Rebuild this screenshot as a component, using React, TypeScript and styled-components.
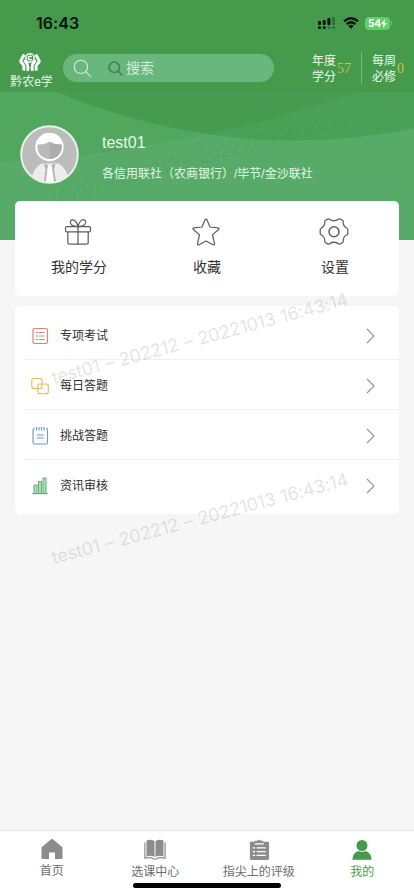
import React from "react";
import styled, { createGlobalStyle } from "styled-components";

const Global = createGlobalStyle`
  * { box-sizing: border-box; }
  html, body { margin: 0; padding: 0; background: #f6f6f6; }
  body { font-family: "Liberation Sans", "Noto Sans CJK SC", sans-serif; color: #333; }
  svg { display: block; flex: none; }
`;

const Screen = styled.div`
  position: relative;
  width: 414px;
  height: 896px;
  overflow: hidden;
  display: flex;
  flex-direction: column;
  background: #f6f6f6;
`;

const TopArea = styled.header`
  height: 91px;
  flex: none;
  background: #459a4c;
`;

const StatusBar = styled.div`
  height: 46px;
  padding: 0 22px 0 36px;
  display: flex;
  align-items: center;
  justify-content: space-between;
`;

const Clock = styled.span`
  font: 600 16px/20px Inter, sans-serif;
  letter-spacing: 0.05px;
  color: #071208;
`;

const StatusIcons = styled.div`
  display: flex;
  align-items: center;
  gap: 8px;
`;

const Battery = styled.div`
  width: 25px;
  height: 13px;
  border-radius: 4px;
  background: #62cf6b;
  color: #fff;
  font: 700 10px/13px Inter, sans-serif;
  display: flex;
  align-items: center;
  justify-content: center;
`;

const BatteryGroup = styled.div`
  display: flex;
  align-items: center;
  gap: 1px;
  margin-left: -2px;
`;

const BatteryTip = styled.i`
  width: 1px;
  height: 4px;
  background: #62cf6b;
`;

const NavRow = styled.div`
  height: 45px;
  display: flex;
  align-items: flex-start;
  padding-left: 10px;
`;

const Brand = styled.div`
  width: 43px;
  margin-right: 10px;
  padding-top: 6px;
  display: flex;
  flex-direction: column;
  align-items: center;
`;

const BrandMark = styled.span`
  margin-right: 4px;
`;

const BrandName = styled.span`
  margin-top: 2px;
  font-size: 12px;
  line-height: 16px;
  color: #eaf7eb;
  white-space: nowrap;
`;

const Search = styled.div`
  width: 211px;
  height: 28px;
  margin-top: 8px;
  border-radius: 14px;
  background: #6ab77e;
  display: flex;
  align-items: center;
`;

const SearchLead = styled.div`
  width: 37px;
  height: 28px;
  padding-left: 10px;
  border-right: 1px solid #67b47b;
  display: flex;
  align-items: center;
`;

const SearchGlyph = styled.span`
  margin-left: 8px;
`;

const SearchText = styled.span`
  margin-left: 3px;
  font-size: 14px;
  line-height: 20px;
  color: #d4edda;
`;

const Stat = styled.div<{ $left: number }>`
  margin-left: ${(p) => p.$left}px;
  padding-top: 6px;
  display: flex;
  align-items: center;
  height: 39px;
`;

const StatLabel = styled.span`
  width: 24px;
  font-size: 12px;
  line-height: 16px;
  color: #eff9ef;
`;

const StatValue = styled.span`
  margin-left: 1px;
  font: 14px/16px "Liberation Serif", serif;
  color: #cfc046;
`;

const StatRule = styled.i`
  width: 1px;
  height: 32px;
  margin: 6px 0 0 10px;
  background: #78b77d;
`;

const Hero = styled.section`
  display: grid;
  height: 149px;
  flex: none;
  margin-bottom: -39.5px;
  > * { grid-area: 1 / 1; }
`;

const Profile = styled.div`
  display: flex;
  align-items: flex-start;
  padding: 33px 0 0 20px;
`;

const ProfileText = styled.div`
  margin-left: 23px;
  padding-top: 8px;
  display: flex;
  flex-direction: column;
`;

const UserName = styled.strong`
  font-weight: 400;
  font-size: 16px;
  line-height: 22px;
  color: #e4fae7;
`;

const UserOrg = styled.span`
  margin-top: 11px;
  font-size: 12px;
  line-height: 18px;
  color: #e4fae7;
  white-space: nowrap;
`;

const Card = styled.section`
  width: 384px;
  flex: none;
  margin-left: 15px;
  border-radius: 5px;
  background: #fff;
  position: relative;
`;

const Shortcuts = styled(Card)`
  height: 95px;
  display: grid;
  grid-template-columns: repeat(3, 1fr);
`;

const Shortcut = styled.div`
  padding-top: 16px;
  display: flex;
  flex-direction: column;
  align-items: center;
  gap: 10.4px;
  font-size: 14px;
  line-height: 20px;
  color: #333;
  > svg { margin-right: 2px; }
`;

const Menu = styled(Card)`
  height: 208.5px;
  margin-top: 10px;
  padding: 4px 0 0 10px;
`;

const MenuRow = styled.div<{ $last?: boolean }>`
  height: ${(p) => (p.$last ? 48.5 : 50.2)}px;
  display: flex;
  align-items: center;
  padding: 3px 24px 0 6px;
  border-bottom: ${(p) => (p.$last ? "0" : "1.5px solid #f0f0f0")};
`;

const MenuLabel = styled.span`
  margin-left: 11px;
  flex: 1;
  font-size: 12px;
  line-height: 18px;
  color: #2e2e2e;
`;

const Chevron = styled.svg`
  margin-top: 1px;
`;

const Spacer = styled.div`
  flex: 1;
`;

const TabBar = styled.nav`
  height: 66px;
  flex: none;
  border-top: 1px solid #e6e6e6;
  background: #fff;
  display: grid;
  grid-template-columns: repeat(4, 1fr);
`;

const Tab = styled.div<{ $active?: boolean; $drop?: number }>`
  padding-top: ${(p) => 6.5 + (p.$drop ?? 0)}px;
  display: flex;
  flex-direction: column;
  align-items: center;
  gap: 2px;
  font-size: 12px;
  line-height: 18px;
  color: ${(p) => (p.$active ? "#459a4c" : "#6d6d6d")};
`;

const HomeIndicator = styled.i`
  position: absolute;
  left: 133px;
  bottom: 8px;
  width: 148px;
  height: 5px;
  border-radius: 3px;
  background: #000;
`;

const Watermark = styled.span<{ $top: number; $faint?: boolean }>`
  position: absolute;
  left: 55px;
  top: ${(p) => p.$top}px;
  transform: rotate(-15deg);
  transform-origin: 0 100%;
  font: 400 18px/22px Inter, sans-serif;
  letter-spacing: -0.2px;
  word-spacing: 0.9px;
  white-space: nowrap;
  color: ${(p) => (p.$faint ? "rgba(60, 100, 60, 0.09)" : "rgba(130, 130, 130, 0.22)")};
  pointer-events: none;
`;

const Waves = () => (
  <svg width="414" height="149" viewBox="0 0 414 149">
    <path fill="#58aa69" d="M0 0h414v149H0z" />
    <path fill="#52a75f" d="M0 0H358C310 18 260 32 207 43Q110 65 0 71z" />
    <path fill="#4ba057" d="M55 0C100 19 150 34 207 43S340 53 414 37V0z" />
    <path fill="#479b50" d="M55 0C100 19 150 34 207 43C260 32 310 18 358 0z" />
    <path fill="#439548" opacity=".6" d="M0 0h414v1H0z" />
  </svg>
);

const Avatar = () => (
  <svg width="59" height="60" viewBox="0 0 59 60">
    <defs>
      <clipPath id="avatar-disc"><circle cx="29.5" cy="30.5" r="28" /></clipPath>
    </defs>
    <circle cx="29.5" cy="30.5" r="28.5" fill="#bcbcbc" />
    <g clipPath="url(#avatar-disc)">
      <path fill="#ededed" d="M10 60c2-11 6-18 12-20.500h16c6 2.500 10 9.500 12 20.500z" />
      <path fill="#b5b5b5" d="M24 39.500 28 41 25.500 60H23.500L25.500 46zM35.500 39.500 31.500 41 34.500 60H36.500L34 46z" />
      <path fill="#fff" d="M28 42h3.500l2.500 18h-8z" />
      <circle cx="29.5" cy="23" r="14.200" fill="#fff" />
      <path fill="#bababa" d="M17.500 20.500c5 .4 9-.8 12-3 3 2.200 7 3.400 12 3 1.200 8-4 14.500-12 14.500s-13.200-6.500-12-14.500z" />
      <path fill="#adadad" d="M29.500 17.500c3 2.200 7 3.400 12 3 1.200 8-4 14.500-12 14.500z" />
    </g>
    <circle cx="29.5" cy="30.5" r="28.300" fill="none" stroke="#e7f5e9" strokeWidth="1.900" />
  </svg>
);

const Logo = () => (
  <svg width="22" height="20" viewBox="0 0 22 20" fill="none" stroke="#fff">
    <path strokeWidth="3" d="M5.200 2.500 1.900 8.500Q1.500 10 3 11.200 6 13.500 4.500 18.500M16.800 2.500 20.100 8.500Q20.500 10 19 11.200 16 13.500 17.500 18.500" />
    <path strokeWidth="2.800" d="M5.200 8.300Q10.300 12 8.500 18.800M16.800 8.300Q11.700 12 13.500 18.800" />
    <circle cx="11" cy="6" r="4.200" strokeWidth="1.500" />
    <path strokeWidth="1.500" d="M12.600 5a1.800 1.800 0 1 0 0 2" />
  </svg>
);

const Magnifier = ({ size, color, width }: { size: number; color: string; width: number }) => (
  <svg width={size} height={size} viewBox="0 0 18 18" fill="none" stroke={color} strokeWidth={width} strokeLinecap="round">
    <circle cx="7.500" cy="7.500" r="6.300" />
    <path d="m12.300 12.300 4.400 4.400" />
  </svg>
);

const Signal = () => (
  <svg width="17" height="12" viewBox="0 0 17 12" fill="#071208">
    <rect x="0" y="4" width="3" height="4" rx="1" />
    <rect x="4.700" y="3" width="3" height="5" rx="1" />
    <rect x="9.400" y="1" width="3" height="7" rx="1" />
    <rect x="0" y="9.200" width="3" height="2.800" rx="1" />
    <rect x="4.700" y="9.200" width="3" height="2.800" rx="1" />
    <g opacity=".3">
      <rect x="14" y="0" width="3" height="8" rx="1" />
      <rect x="9.400" y="9.200" width="3" height="2.800" rx="1" />
      <rect x="14" y="9.200" width="3" height="2.800" rx="1" />
    </g>
  </svg>
);

const Wifi = () => (
  <svg width="16" height="12" viewBox="0 0 16 12" fill="none" stroke="#071208" strokeWidth="2.200">
    <path d="M1 4.300Q8-1.800 15 4.300M3.600 7.100Q8 3.400 12.400 7.100" />
    <path stroke="none" fill="#071208" d="M5.300 8.800Q8 6.900 10.700 8.800L8 11.700z" />
  </svg>
);

const Gift = () => (
  <svg width="28" height="30" viewBox="0 0 28 30" fill="none" stroke="#5f5f5f" strokeWidth="1.250">
    <rect x="1.500" y="9.500" width="25" height="5.300" rx="1.300" />
    <path d="M3.800 15v10.500c0 1 .7 1.700 1.700 1.700h17c1 0 1.700-.7 1.700-1.700V15M14 9.500v17.700" />
    <path d="M14 9.500C8 9.500 5.500 7 6.500 4.300S12 2 14 9.500c2-7.500 6.500-8 7.500-5.200S20 9.500 14 9.500z" />
  </svg>
);

const Star = () => (
  <svg width="28" height="30" viewBox="0 0 28 30" fill="none" stroke="#5f5f5f" strokeWidth="1.250" strokeLinejoin="round">
    <path d="M13 2.800c.4-1 1.500-1 1.900 0l3.100 7.200 8 .8c1.100.1 1.400 1 .6 1.700l-6.100 5.400 2 8.800c.2 1-.6 1.600-1.500 1.100L14 24l-7 3.800c-.9.500-1.700-.1-1.500-1.100l2-8.800-6.100-5.400c-.8-.7-.5-1.600.6-1.700l8-.8z" />
  </svg>
);

const Gear = () => (
  <svg width="30" height="30" viewBox="0 0 30 30" fill="none" stroke="#5f5f5f" strokeWidth="1.250" strokeLinejoin="round">
    <path d="M9.200 1.900q.9-.3 1.600.5 4.200 2.700 8.400 0 .7-.8 1.600-.5l2.700 1.400q.8.500.7 1.500-.2 4.700 3.700 6.400.8.400.9 1.400v3.800q-.1 1-.9 1.400-3.900 1.700-3.700 6.400.1 1-.7 1.500l-2.700 1.400q-.9.300-1.600-.5-4.200-2.700-8.400 0-.7.800-1.600.5l-2.700-1.400q-.8-.5-.7-1.500.2-4.700-3.700-6.400-.8-.4-.9-1.400v-3.800q.1-1 .9-1.400 3.900-1.700 3.700-6.400-.1-1 .7-1.500z" />
    <circle cx="15" cy="14.700" r="5" strokeWidth="1.500" />
  </svg>
);

const ExamIcon = () => (
  <svg width="18" height="18" viewBox="0 0 18 18" fill="none" stroke="#da8474">
    <rect x="2" y="1.500" width="14.500" height="15" rx="1.500" strokeWidth="1.200" />
    <path d="M5 5.500h2M8 5.500h5.500M5 9h2M8 9h5.500M5 12.500h2M8 12.500h5.500" />
  </svg>
);

const DailyIcon = () => (
  <svg width="18" height="18" viewBox="0 0 18 18" fill="none" stroke="#e5b85f" strokeWidth="1.100">
    <rect x=".8" y="1.500" width="10.200" height="10" rx="2" />
    <rect x="6.800" y="7" width="10.500" height="9.800" rx="2" />
  </svg>
);

const ChallengeIcon = () => (
  <svg width="18" height="18" viewBox="0 0 18 18" fill="none" stroke="#6699d5" strokeWidth="1.100">
    <path d="M3.500 1.500H3Q2 1.500 2 2.500v13q0 1.500 1.500 1.500H15q1.500 0 1.500-1.500v-13q0-1-1-1H15M5.500 0v3.500M8 0v3.500M10.500 0v3.500M13 0v3.500M5.800 8h7M5.800 11h7" />
  </svg>
);

const ReviewIcon = () => (
  <svg width="18" height="18" viewBox="0 0 18 18" fill="#b7dbc0" stroke="#60ae75" strokeWidth="1">
    <path d="M3 8h3v8.500H3zM7.500 4.500h3v12h-3zM12 1h3v15.500h-3zM1 16.700h16" />
  </svg>
);

const HomeIcon = () => (
  <svg width="22" height="22" viewBox="0 0 22 22" fill="#8c8c8c">
    <path d="M10 1.300q1-.7 2 0l8.500 7.200q1 .8 1 2V20q0 1-1 1H14v-6.500H8V21H1.500q-1 0-1-1v-9.500q0-1.200 1-2z" />
  </svg>
);

const BookIcon = () => (
  <svg width="22" height="22" viewBox="0 0 22 22" fill="#8c8c8c">
    <path d="M2.500 1.500Q7-.2 10.500 2v16Q7 16 2.500 17.500zM11.500 2Q15-.2 19.500 1.500v16Q15 16 11.500 18z" />
    <path fill="none" stroke="#8c8c8c" strokeWidth="1.200" d="M.9 3.500v15.700q5.500-1.500 9 .8h2.200q3.500-2.300 9-.8V3.500" />
  </svg>
);

const ClipboardIcon = () => (
  <svg width="22" height="22" viewBox="0 0 23 22" fill="#8c8c8c">
    <path d="M2 2.500h5V1.300h2.500Q11.500-.8 13.500 1.300H16v1.200h5q1 0 1 1V20q0 1.500-1.500 1.500h-17Q2 21.500 2 20z" />
    <path fill="none" stroke="#fff" strokeWidth="1.300" d="M7 4.500h9.500M5 8.700h2.500M9 8.700h9.500M5 12.700h2.500M9 12.700h9.500M5 16.700h2.500M9 16.700h9.500" />
  </svg>
);

const PersonIcon = () => (
  <svg width="22" height="22" viewBox="0 0 22 22" fill="#459a4c">
    <circle cx="11" cy="6.500" r="5.500" />
    <path d="M1.500 20.800c0-5 2.500-7.800 6-8.800q3.500 1.700 7 0c3.500 1 6 3.800 6 8.800z" />
  </svg>
);

const menu = [
  { label: "专项考试", icon: <ExamIcon /> },
  { label: "每日答题", icon: <DailyIcon /> },
  { label: "挑战答题", icon: <ChallengeIcon /> },
  { label: "资讯审核", icon: <ReviewIcon /> },
];

const stamp = "test01 – 202212 – 20221013 16:43:14";

export default function App() {
  return (
    <Screen>
      <Global />
      <TopArea>
        <StatusBar>
          <Clock>16:43</Clock>
          <StatusIcons>
            <Signal />
            <Wifi />
            <BatteryGroup>
              <Battery>
                54
                <svg width="6" height="9" viewBox="0 0 6 9" fill="#fff"><path d="M4 0 0 5h2.300L2 9l4-5H3.600z" /></svg>
              </Battery>
              <BatteryTip />
            </BatteryGroup>
          </StatusIcons>
        </StatusBar>
        <NavRow>
          <Brand>
            <BrandMark><Logo /></BrandMark>
            <BrandName>黔农e学</BrandName>
          </Brand>
          <Search>
            <SearchLead><Magnifier size={19} color="#d4edda" width={1} /></SearchLead>
            <SearchGlyph><Magnifier size={15} color="#3f8653" width={2} /></SearchGlyph>
            <SearchText>搜索</SearchText>
          </Search>
          <Stat $left={38}>
            <StatLabel>年度学分</StatLabel>
            <StatValue>57</StatValue>
          </Stat>
          <StatRule />
          <Stat $left={10}>
            <StatLabel>每周必修</StatLabel>
            <StatValue>0</StatValue>
          </Stat>
        </NavRow>
      </TopArea>

      <Hero>
        <Waves />
        <Profile>
          <Avatar />
          <ProfileText>
            <UserName>test01</UserName>
            <UserOrg>各信用联社（农商银行）/毕节/金沙联社</UserOrg>
          </ProfileText>
        </Profile>
      </Hero>

      <Shortcuts>
        <Shortcut><Gift />我的学分</Shortcut>
        <Shortcut><Star />收藏</Shortcut>
        <Shortcut><Gear />设置</Shortcut>
      </Shortcuts>

      <Menu>
        {menu.map((item, i) => (
          <MenuRow key={item.label} $last={i === menu.length - 1}>
            {item.icon}
            <MenuLabel>{item.label}</MenuLabel>
            <Chevron width="9" height="16" viewBox="0 0 9 16" fill="none" stroke="#929292" strokeWidth="1.100">
              <path d="m1 1 7 7-7 7" />
            </Chevron>
          </MenuRow>
        ))}
      </Menu>

      <Spacer />

      <TabBar>
        <Tab><HomeIcon />首页</Tab>
        <Tab $drop={1.5}><BookIcon />选课中心</Tab>
        <Tab $drop={1.5}><ClipboardIcon />指尖上的评级</Tab>
        <Tab $drop={1.5} $active><PersonIcon />我的</Tab>
      </TabBar>

      <HomeIndicator />
      <Watermark $top={186} $faint>{stamp}</Watermark>
      <Watermark $top={367}>{stamp}</Watermark>
      <Watermark $top={547}>{stamp}</Watermark>
    </Screen>
  );
}
